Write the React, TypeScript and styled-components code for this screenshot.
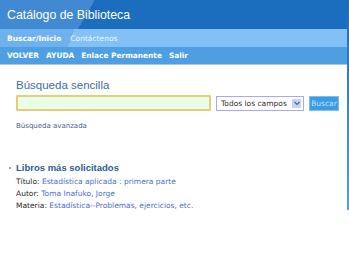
import React from "react";
import styled, { createGlobalStyle } from "styled-components";

const Global = createGlobalStyle`
  html, body { margin: 0; padding: 0; background: #ffffff; }
  body { font-family: "DejaVu Sans", Verdana, sans-serif; }
`;

const Page = styled.div`
  width: 347px;
  border-right: 2px solid;
  border-image: linear-gradient(to bottom, #1a6cbc, #4aa2ee) 1;
`;

const Header = styled.div`
  height: 29px;
  display: flex;
  align-items: center;
  padding-left: 7px;
  background: linear-gradient(120deg, #4189d2 82px, #1b6ebe 82px);
`;

const Title = styled.h1`
  margin: 0;
  font-family: "Liberation Sans", Arial, sans-serif;
  font-weight: 400;
  font-size: 12.3px;
  color: #ffffff;
`;

const SubNav = styled.div`
  height: 18px;
  display: flex;
  align-items: center;
  gap: 9px;
  padding-left: 7px;
  background: linear-gradient(110deg, #6eb1ef 70px, #82c0f6 70px);
`;

const SubLink = styled.span<{ $active?: boolean }>`
  font-size: 7.5px;
  font-weight: ${(p) => (p.$active ? 700 : 400)};
  color: ${(p) => (p.$active ? "#ffffff" : "#eef6ff")};
`;

const Nav = styled.div`
  height: 17px;
  display: flex;
  align-items: center;
  gap: 7px;
  padding-left: 7px;
  background: #4d9fe2;
  border-bottom: 1px solid #b8c4d0;
`;

const NavLink = styled.span`
  font-size: 7.4px;
  font-weight: 700;
  color: #ffffff;
`;

const Main = styled.div`
  padding: 14px 0 0 16px;
`;

const SectionTitle = styled.h2`
  margin: 0 0 4px;
  font-family: "Liberation Sans", Arial, sans-serif;
  font-weight: 400;
  font-size: 11.5px;
  color: #3d6ea6;
`;

const SearchRow = styled.div`
  display: flex;
  align-items: center;
  gap: 5px;
`;

const TextInput = styled.div`
  width: 191px;
  height: 12px;
  background: #eaffe8;
  border: 2px solid #e6cd7a;
  border-radius: 1px;
`;

const Select = styled.div`
  width: 80px;
  height: 13px;
  border: 1px solid #a9a9f2;
  display: flex;
  align-items: center;
  justify-content: space-between;
  padding: 0 2px 0 4px;
  font-size: 7.5px;
  color: #303030;
  background: #ffffff;
`;

const Arrow = styled.span`
  width: 9px;
  height: 9px;
  background: #c6d4f4;
  display: flex;
  align-items: center;
  justify-content: center;
`;

const Button = styled.div`
  width: 28px;
  height: 13px;
  background: #3d9de2;
  border: 1px solid #7fbff0;
  display: flex;
  align-items: center;
  justify-content: center;
  font-size: 7.5px;
  color: #bfe0fb;
`;

const Advanced = styled.div`
  margin-top: 11px;
  font-size: 7px;
  color: #3f5f8e;
`;

const Popular = styled.div`
  margin-top: 32px;
  margin-left: -7px;
  display: flex;
  flex-direction: column;
  gap: 3px;
`;

const PopTitle = styled.div`
  display: flex;
  align-items: center;
  gap: 5px;
  font-family: "Liberation Sans", Arial, sans-serif;
  font-size: 9.5px;
  font-weight: 700;
  color: #2d5c92;
  margin-bottom: 1px;
`;

const Bullet = styled.span`
  width: 2px;
  height: 2px;
  background: #a0a8b8;
`;

const Line = styled.div`
  padding-left: 7px;
  font-size: 7.5px;
  color: #2a2a2a;
`;

const Value = styled.span`
  color: #4a6ed0;
`;

export default function App() {
  return (
    <>
      <Global />
      <Page>
        <Header>
          <Title>Catálogo de Biblioteca</Title>
        </Header>
        <SubNav>
          <SubLink $active>Buscar/Inicio</SubLink>
          <SubLink>Contáctenos</SubLink>
        </SubNav>
        <Nav>
          <NavLink>VOLVER</NavLink>
          <NavLink>AYUDA</NavLink>
          <NavLink>Enlace Permanente</NavLink>
          <NavLink>Salir</NavLink>
        </Nav>
        <Main>
          <SectionTitle>Búsqueda sencilla</SectionTitle>
          <SearchRow>
            <TextInput />
            <Select>
              <span>Todos los campos</span>
              <Arrow>
                <svg width="6" height="5" viewBox="0 0 6 5">
                  <path d="M0.5 1 L3 3.5 L5.5 1" stroke="#5060a0" strokeWidth="1.2" fill="none" />
                </svg>
              </Arrow>
            </Select>
            <Button>Buscar</Button>
          </SearchRow>
          <Advanced>Búsqueda avanzada</Advanced>
          <Popular>
            <PopTitle>
              <Bullet />
              Libros más solicitados
            </PopTitle>
            <Line>
              Título: <Value>Estadística aplicada : primera parte</Value>
            </Line>
            <Line>
              Autor: <Value>Toma Inafuko, Jorge</Value>
            </Line>
            <Line>
              Materia: <Value>Estadística--Problemas, ejercicios, etc.</Value>
            </Line>
          </Popular>
        </Main>
      </Page>
    </>
  );
}
